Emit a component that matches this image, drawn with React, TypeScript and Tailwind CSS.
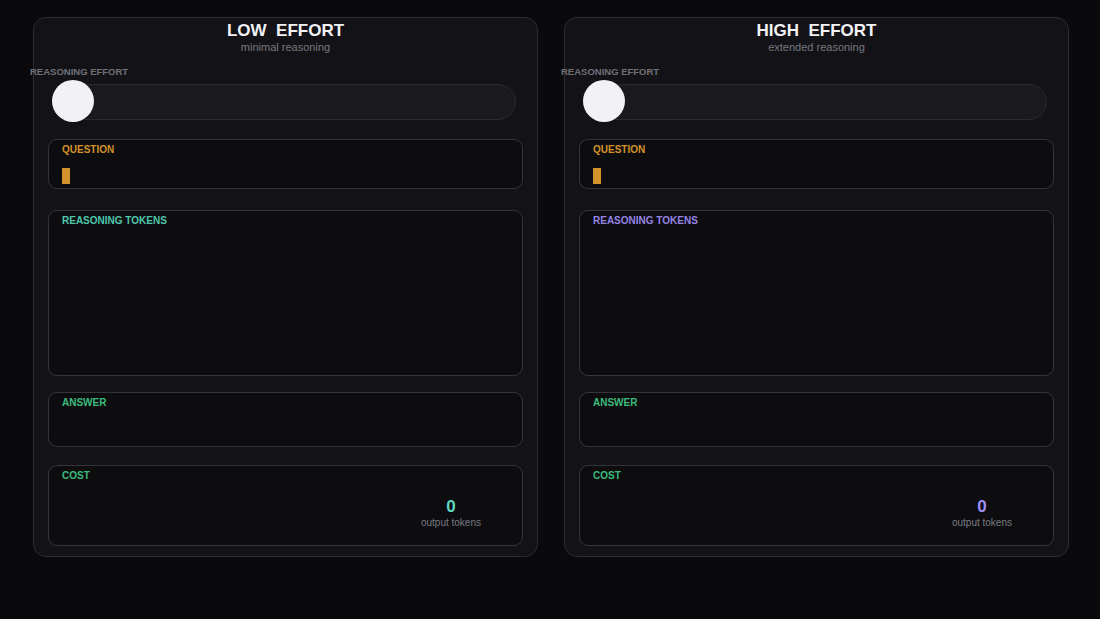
type PanelProps = {
  title: string;
  subtitle: string;
  accent: string; // reasoning label + cost value colour
};

function Box({
  label,
  labelClass,
  className,
  children,
}: {
  label: string;
  labelClass: string;
  className: string;
  children?: React.ReactNode;
}) {
  return (
    <div className={"rounded-[9px] border border-[#34343a] bg-[#0d0d10] " + className}>
      <div className={"pl-[13px] pt-[4px] text-[10px] font-bold leading-[12px] " + labelClass}>{label}</div>
      {children}
    </div>
  );
}

function Panel({ title, subtitle, accent }: PanelProps) {
  const isLow = accent === "teal";
  return (
    <div className="flex h-[540px] w-[505px] flex-col rounded-[13px] border border-[#2c2c32] bg-[#131317] px-[14px]">
      {/* header */}
      <div className="pt-[2px] text-center">
        <div className="whitespace-pre text-[17px] font-bold leading-[21px] text-[#f2f2f5]">{title}</div>
        <div className="text-[11px] leading-[13px] text-[#77777e]">{subtitle}</div>
      </div>

      {/* effort slider */}
      <div className="-ml-[18px] mt-[12px] text-[9.5px] font-bold leading-[12px] text-[#707077]">
        REASONING EFFORT
      </div>
      <div className="relative ml-[4px] mr-[7px] mt-[6px] h-[36px] rounded-full border border-[#2a2a30] bg-[#1a1a1e]">
        <div className="absolute left-[-1px] top-[-5px] h-[42px] w-[42px] rounded-full bg-[#f1f1f6]" />
      </div>

      <Box label="QUESTION" labelClass="text-[#d4922a]" className="mt-[19px] h-[50px]">
        <div className="ml-[13px] mt-[12px] h-[16px] w-[8px] bg-[#d4922a]" />
      </Box>

      <Box
        label="REASONING TOKENS"
        labelClass={isLow ? "text-[#4fc7ad]" : "text-[#9683e4]"}
        className="mt-[21px] h-[166px]"
      />

      <Box label="ANSWER" labelClass="text-[#3dbb7c]" className="mt-[16px] h-[55px]" />

      <Box label="COST" labelClass="text-[#3dbb7c]" className="mt-[18px] h-[81px]">
        <div className="flex justify-end pr-[41px] pt-[15px]">
          <div className="text-center">
            <div className={"text-[17px] font-bold leading-[20px] " + (isLow ? "text-[#5fd8c3]" : "text-[#a08ef2]")}>0</div>
            <div className="text-[10px] leading-[12px] text-[#7a7a82]">output tokens</div>
          </div>
        </div>
      </Box>
    </div>
  );
}

export default function App() {
  return (
    <div
      className="h-[619px] w-[1100px] overflow-hidden bg-[#0a0a0c]"
      style={{ fontFamily: '"Liberation Sans", Arial, sans-serif' }}
    >
      <div className="flex gap-[26px] pl-[33px] pt-[17px]">
        <Panel title="LOW  EFFORT" subtitle="minimal reasoning" accent="teal" />
        <Panel title="HIGH  EFFORT" subtitle="extended reasoning" accent="purple" />
      </div>
    </div>
  );
}
